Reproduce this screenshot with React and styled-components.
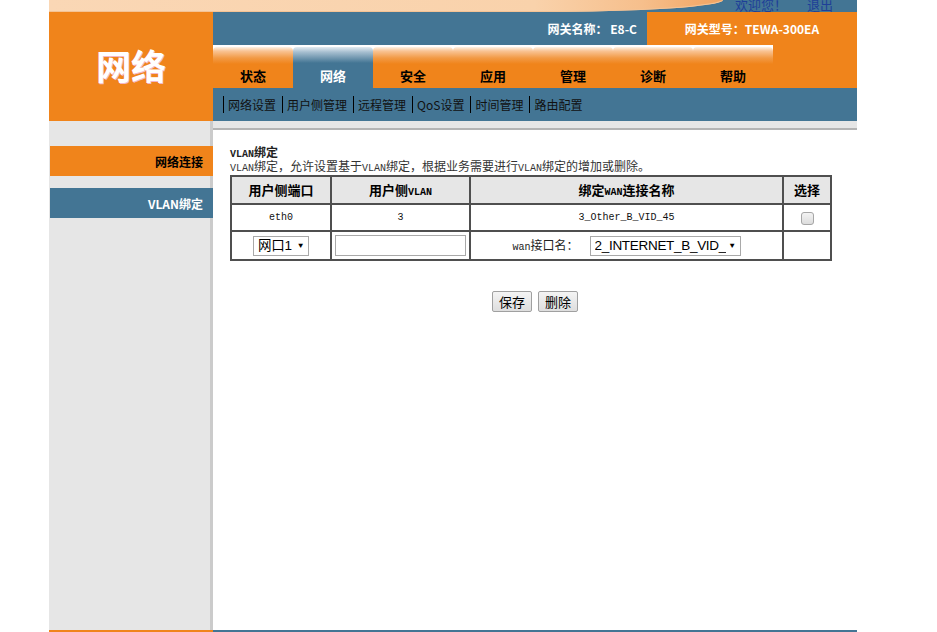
import styled, { createGlobalStyle } from 'styled-components';

const orange = '#f0841b';
const blue = '#437594';
const grey = '#e6e6e6';

const GlobalStyle = createGlobalStyle`
  body {
    margin: 0;
    background: #fff;
    font-family: "Noto Sans CJK SC", "Liberation Sans", sans-serif;
    font-size: 12px;
    color: #000;
  }
`;

const tabs = ['状态', '网络', '安全', '应用', '管理', '诊断', '帮助'];
const subMenus = ['网络设置', '用户侧管理', '远程管理', 'QoS设置', '时间管理', '路由配置'];

export default function App() {
  return (
    <>
      <GlobalStyle />
      <Page>
        <TopStrip>
          <Banner />
          <Welcome>
            <WelcomeLink>欢迎您！</WelcomeLink>
            <WelcomeLink>退出</WelcomeLink>
          </Welcome>
        </TopStrip>

        <Header>
          <Logo>网络</Logo>
          <HeaderRight>
            <InfoBar>
              <GatewayName>网关名称： E8-C</GatewayName>
              <GatewayModel>网关型号：TEWA-300EA</GatewayModel>
            </InfoBar>
            <TabRow>
              <TabList>
                {tabs.map((t) => (
                  <Tab key={t} $active={t === '网络'}>
                    {t}
                  </Tab>
                ))}
              </TabList>
              <TabFiller />
            </TabRow>
            <SubNav>
              {subMenus.map((m) => (
                <SubItem key={m}>{m}</SubItem>
              ))}
            </SubNav>
          </HeaderRight>
        </Header>

        <Body>
          <Sidebar>
            <SideItem $variant="orange">网络连接</SideItem>
            <SideItem $variant="blue">VLAN绑定</SideItem>
          </Sidebar>
          <Main>
            <Title>
              <Mono>VLAN</Mono>绑定
            </Title>
            <Desc>
              <Mono>VLAN</Mono>绑定，允许设置基于<Mono>VLAN</Mono>绑定，根据业务需要进行<Mono>VLAN</Mono>
              绑定的增加或删除。
            </Desc>
            <Table>
              <colgroup>
                <col style={{ width: 100 }} />
                <col style={{ width: 139 }} />
                <col style={{ width: 313 }} />
                <col style={{ width: 48 }} />
              </colgroup>
              <thead>
                <tr>
                  <Th>用户侧端口</Th>
                  <Th>
                    用户侧<Mono>VLAN</Mono>
                  </Th>
                  <Th>
                    绑定<Mono>WAN</Mono>连接名称
                  </Th>
                  <Th>选择</Th>
                </tr>
              </thead>
              <tbody>
                <tr>
                  <Td $h={27}>eth0</Td>
                  <Td $h={27}>3</Td>
                  <Td $h={27}>3_Other_B_VID_45</Td>
                  <Td $h={27}>
                    <Check type="checkbox" />
                  </Td>
                </tr>
                <tr>
                  <Td $h={29}>
                    <FakeSelect $w={56}>
                      <SelectText>网口1</SelectText>
                      <Arrow>▼</Arrow>
                    </FakeSelect>
                  </Td>
                  <Td $h={29}>
                    <TextInput type="text" />
                  </Td>
                  <Td $h={29}>
                    <WanField>
                      <WanLabel>
                        <Mono>wan</Mono>接口名：
                      </WanLabel>
                      <FakeSelect $w={151}>
                        <SelectText>2_INTERNET_B_VID_</SelectText>
                        <Arrow>▼</Arrow>
                      </FakeSelect>
                    </WanField>
                  </Td>
                  <Td $h={29} />
                </tr>
              </tbody>
            </Table>
            <Buttons>
              <Button>保存</Button>
              <Button>删除</Button>
            </Buttons>
          </Main>
        </Body>

        <Footer>
          <FooterPart $color={orange} />
          <FooterPart $color={blue} />
        </Footer>
      </Page>
    </>
  );
}

const Page = styled.div`
  width: 808px;
  height: 632px;
  margin-left: 49px;
  display: flex;
  flex-direction: column;
`;

const TopStrip = styled.div`
  height: 12px;
  background: ${blue};
  display: flex;
  justify-content: space-between;
  overflow: hidden;
`;

const Banner = styled.div`
  width: 674px;
  height: 12px;
  background: linear-gradient(to right, #fad7b5 0%, #f9d2ab 72%, #f6bf8c 88%, #f2a360 100%);
  border-bottom-right-radius: 185px 12px;
  box-shadow: inset 0 -1px 0 #f4c395;
`;

const Welcome = styled.div`
  display: flex;
  gap: 20px;
  padding-right: 24px;
  align-self: flex-end;
  line-height: 15px;
`;

const WelcomeLink = styled.span`
  color: #1e3f98;
  font-size: 13px;
`;

const Header = styled.div`
  display: grid;
  grid-template-columns: 164px 1fr;
  height: 109px;
`;

const Logo = styled.div`
  background: ${orange};
  color: #fff;
  font-size: 35px;
  font-weight: 700;
  display: flex;
  align-items: center;
  justify-content: center;
  padding-bottom: 4px;
  text-shadow: 1px 1px 0 #f3b6c8;
`;

const HeaderRight = styled.div`
  display: flex;
  flex-direction: column;
`;

const InfoBar = styled.div`
  display: grid;
  grid-template-columns: 434px 1fr;
  height: 33px;
  color: #fff;
  font-weight: 700;
  font-size: 12px;
`;

const GatewayName = styled.div`
  background: ${blue};
  display: flex;
  align-items: center;
  justify-content: flex-end;
  padding-right: 10px;
`;

const GatewayModel = styled.div`
  background: ${orange};
  display: flex;
  align-items: center;
  justify-content: center;
`;

const TabRow = styled.div`
  display: flex;
  height: 43px;
`;

const TabList = styled.div`
  display: flex;
  background: #fff;
  padding-top: 2px;
`;

const Tab = styled.div`
  width: 80px;
  border-radius: 4px 4px 0 0;
  background: ${(p) =>
    p.$active
      ? `linear-gradient(to bottom, #e4ecf2 0px, #a7bfd0 5px, ${blue} 16px)`
      : `linear-gradient(to bottom, #fff3e6 0px, #f9c495 4px, #f29a45 11px, ${orange} 17px)`};
  color: ${(p) => (p.$active ? '#fff' : '#000')};
  font-size: 13px;
  font-weight: 700;
  display: flex;
  justify-content: center;
  align-items: flex-end;
  padding-bottom: 3px;
  box-sizing: border-box;
`;

const TabFiller = styled.div`
  flex: 1;
  background: ${orange};
`;

const SubNav = styled.div`
  height: 33px;
  background: ${blue};
  display: flex;
  align-items: center;
  padding-left: 10px;
`;

const SubItem = styled.span`
  border-left: 1px solid #000;
  padding: 0 6px 0 4px;
  line-height: 17px;
  font-size: 12px;
  color: #111;
`;

const Body = styled.div`
  flex: 1;
  display: grid;
  grid-template-columns: 164px 1fr;
  background: ${grey};
`;

const Sidebar = styled.div`
  padding-top: 25px;
  display: flex;
  flex-direction: column;
  gap: 12px;
  box-shadow: inset -4px 0 0 -1px #cbcbcb;
`;

const SideItem = styled.div`
  margin-left: 1px;
  height: 30px;
  background: ${(p) => (p.$variant === 'blue' ? blue : orange)};
  color: ${(p) => (p.$variant === 'blue' ? '#fff' : '#000')};
  font-weight: 700;
  font-size: 12px;
  display: flex;
  align-items: center;
  justify-content: flex-end;
  padding-right: 10px;
`;

const Main = styled.div`
  margin-top: 7px;
  background: #fff;
  border-top: 2px solid #b4b4b4;
  padding: 15px 17px 0;
`;

const Mono = styled.span`
  font-family: "Liberation Mono", monospace;
  font-size: 10px;
  line-height: 1;
`;

const Title = styled.div`
  height: 14px;
  font-weight: 700;
  font-size: 12px;
  line-height: 14px;
  color: #222;
`;

const Desc = styled.div`
  height: 14px;
  font-size: 12px;
  line-height: 14px;
  color: #333;
  margin-bottom: 2px;
  white-space: nowrap;
`;

const Table = styled.table`
  width: 600px;
  border-collapse: collapse;
  table-layout: fixed;
  border: 2px solid #4f4f4f;
`;

const Th = styled.th`
  height: 26px;
  background: ${grey};
  border: 2px solid #4f4f4f;
  font-size: 13px;
  line-height: 16px;
  font-weight: 700;
  padding: 0;
  color: #000;
`;

const Td = styled.td`
  height: ${(p) => p.$h - 2}px;
  border: 2px solid #4f4f4f;
  padding: 0;
  text-align: center;
  font-family: "Liberation Mono", "Noto Sans CJK SC", monospace;
  font-size: 10px;
  line-height: 14px;
  color: #111;
`;

const Check = styled.input`
  appearance: none;
  width: 13px;
  height: 13px;
  margin: 2px 0 0;
  border: 1px solid #a6a6a6;
  border-radius: 3px;
  background: linear-gradient(#f3f3f3, #dcdcdc);
  vertical-align: middle;
`;

const FakeSelect = styled.div`
  display: inline-flex;
  align-items: center;
  justify-content: space-between;
  box-sizing: border-box;
  width: ${(p) => p.$w}px;
  height: 20px;
  border: 1px solid #a9a9a9;
  background: #fff;
  padding: 0 5px 0 4px;
  overflow: hidden;
  vertical-align: middle;
`;

const SelectText = styled.span`
  font-family: "Liberation Sans", "Noto Sans CJK SC", sans-serif;
  font-size: 13.5px;
  letter-spacing: -0.3px;
  color: #000;
  white-space: nowrap;
  overflow: hidden;
`;

const Arrow = styled.span`
  font-size: 8px;
  color: #000;
  margin-left: 3px;
  flex-shrink: 0;
`;

const TextInput = styled.input`
  box-sizing: border-box;
  width: 131px;
  height: 21px;
  border: 1px solid #a9a9a9;
  margin: 0;
  vertical-align: middle;
`;

const WanField = styled.div`
  display: flex;
  align-items: center;
  justify-content: center;
  gap: 11px;
`;

const WanLabel = styled.span`
  font-family: "Noto Sans CJK SC", sans-serif;
  font-size: 12px;
  line-height: 14px;
  color: #222;
`;

const Buttons = styled.div`
  display: flex;
  justify-content: center;
  gap: 6px;
  margin-top: 30px;
`;

const Button = styled.button`
  width: 40px;
  height: 21px;
  padding: 0;
  font-family: "Noto Sans CJK SC", sans-serif;
  font-size: 13px;
  color: #000;
  border: 1px solid #a0a0a0;
  border-radius: 2px;
  background: linear-gradient(#f4f4f4, #dedede);
`;

const Footer = styled.div`
  display: grid;
  grid-template-columns: 164px 1fr;
  height: 2px;
`;

const FooterPart = styled.div`
  background: ${(p) => p.$color};
`;
